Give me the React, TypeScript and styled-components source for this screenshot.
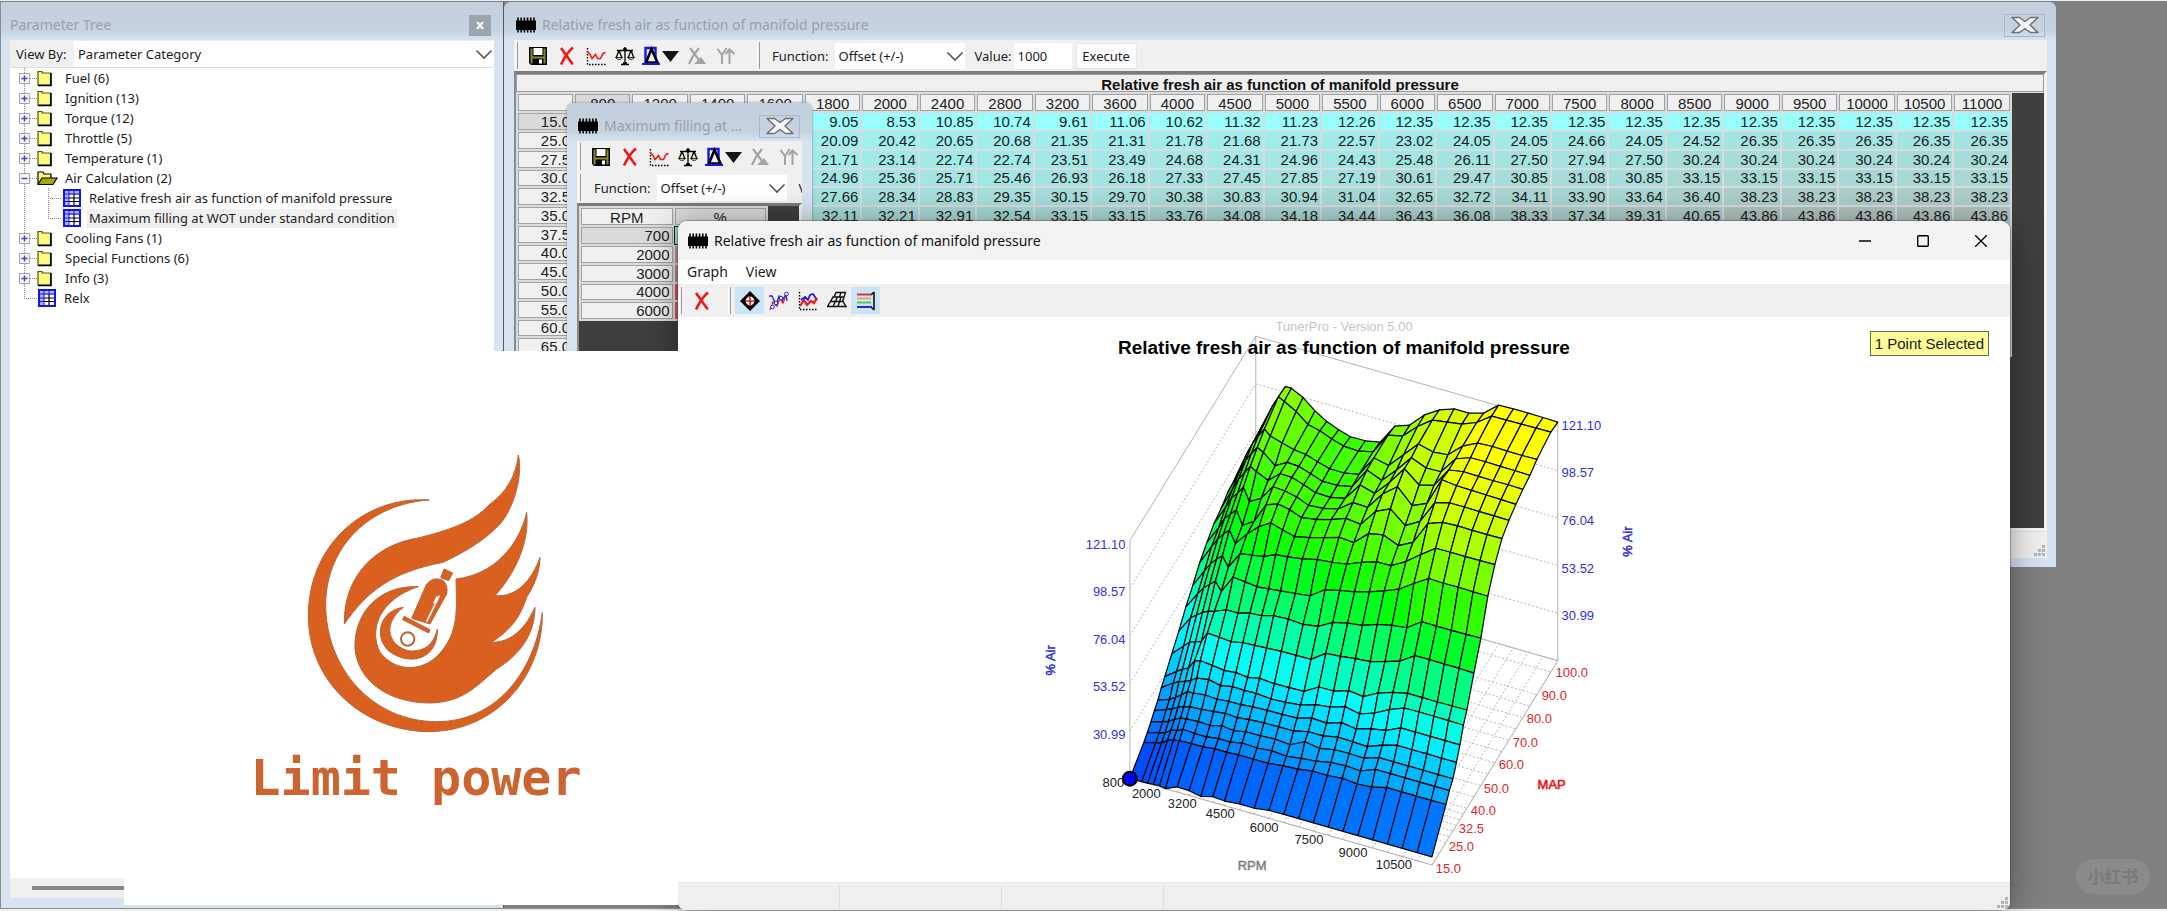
import React from "react";
import styled, { createGlobalStyle, css } from "styled-components";

const UI = `"Noto Sans", "Open Sans", sans-serif`;
const ARIAL = `"Liberation Sans", Arial, sans-serif`;

const GlobalStyle = createGlobalStyle`
  *, *::before, *::after { box-sizing: border-box; }
  body { margin: 0; background: #808080; font: 13px ${UI}; color: #1c1c1c; }
  button, select, input { font: inherit; color: inherit; border: 0; padding: 0; margin: 0; border-radius: 0; }
  button { background: none; }
`;

/* ---------- data ---------- */

const RPM = [
  800, 1200, 1400, 1600, 1800, 2000, 2400, 2800, 3200, 3600, 4000, 4500, 5000, 5500, 6000, 6500, 7000, 7500,
  8000, 8500, 9000, 9500, 10000, 10500, 11000,
];

type AirRow = { map: number; low: number[]; air: number[] };

/* Cells of the table from 1800 RPM upwards; `low` holds the four slower columns. */
const AIR: AirRow[] = [
  { map: 15, low: [8.46, 8.5, 8.7, 8.9], air: [9.05, 8.53, 10.85, 10.74, 9.61, 11.06, 10.62, 11.32, 11.23, 12.26, 12.35, 12.35, 12.35, 12.35, 12.35, 12.35, 12.35, 12.35, 12.35, 12.35, 12.35] },
  { map: 25, low: [14.8, 16.3, 17, 19], air: [20.09, 20.42, 20.65, 20.68, 21.35, 21.31, 21.78, 21.68, 21.73, 22.57, 23.02, 24.05, 24.05, 24.66, 24.05, 24.52, 26.35, 26.35, 26.35, 26.35, 26.35] },
  { map: 27.5, low: [16.8, 18.3, 19, 21.1], air: [21.71, 23.14, 22.74, 22.74, 23.51, 23.49, 24.68, 24.31, 24.96, 24.43, 25.48, 26.11, 27.5, 27.94, 27.5, 30.24, 30.24, 30.24, 30.24, 30.24, 30.24] },
  { map: 30, low: [19.1, 20.9, 21.8, 23.6], air: [24.96, 25.36, 25.71, 25.46, 26.93, 26.18, 27.33, 27.45, 27.85, 27.19, 30.61, 29.47, 30.85, 31.08, 30.85, 33.15, 33.15, 33.15, 33.15, 33.15, 33.15] },
  { map: 32.5, low: [21.8, 23.8, 25, 26.6], air: [27.66, 28.34, 28.83, 29.35, 30.15, 29.7, 30.38, 30.83, 30.94, 31.04, 32.65, 32.72, 34.11, 33.9, 33.64, 36.4, 38.23, 38.23, 38.23, 38.23, 38.23] },
  { map: 35, low: [24, 26, 27.8, 29.8], air: [32.11, 32.21, 32.91, 32.54, 33.15, 33.15, 33.76, 34.08, 34.18, 34.44, 36.43, 36.08, 38.33, 37.34, 39.31, 40.65, 43.86, 43.86, 43.86, 43.86, 43.86] },
];
const MORE_MAP = [37.5, 40, 45, 50, 55, 60, 65];

/* Upper part of the surface as plotted heights, in thirds of a chart unit below `top`. */
const RIDGES: { map: number; top: number; y: number[] }[] = [
  { map: 37.5, top: 600, y: [262, 248, 244, 243, 240, 233, 238, 256, 259, 270, 279, 296, 306, 314, 313, 320, 319, 341, 338, 328, 323, 335, 348, 361, 375] },
  { map: 40, top: 600, y: [229, 213, 206, 203, 182, 181, 195, 210, 217, 231, 234, 250, 262, 273, 260, 272, 271, 289, 278, 276, 279, 292, 305, 317, 329] },
  { map: 45, top: 600, y: [160, 137, 125, 124, 123, 98, 110, 124, 127, 135, 143, 153, 165, 177, 159, 168, 175, 184, 184, 182, 166, 178, 191, 204, 218] },
  { map: 50, top: 600, y: [92, 52, 44, 36, 32, 33, 28, 38, 38, 46, 46, 56, 72, 78, 66, 68, 75, 72, 75, 82, 64, 77, 90, 102, 113] },
  { map: 55, top: 380, y: [680, 640, 622, 612, 602, 633, 590, 604, 619, 625, 631, 639, 646, 628, 630, 634, 634, 631, 626, 609, 594, 608, 620, 634, 647] },
  { map: 60, top: 380, y: [615, 570, 550, 536, 526, 560, 519, 524, 528, 522, 529, 535, 537, 545, 551, 545, 544, 555, 543, 522, 503, 515, 528, 540, 552] },
  { map: 65, top: 380, y: [545, 498, 476, 460, 449, 489, 460, 438, 427, 448, 468, 471, 471, 470, 486, 459, 463, 495, 485, 429, 425, 436, 449, 462, 474] },
  { map: 70, top: 380, y: [486, 442, 414, 400, 388, 434, 422, 373, 370, 387, 411, 416, 417, 413, 431, 392, 385, 435, 422, 366, 367, 379, 393, 406, 419] },
  { map: 75, top: 380, y: [430, 380, 352, 338, 320, 363, 353, 318, 331, 349, 374, 383, 385, 366, 380, 340, 318, 375, 368, 297, 315, 329, 343, 357, 371] },
  { map: 80, top: 380, y: [385, 325, 296, 276, 257, 272, 299, 279, 290, 312, 336, 350, 353, 313, 338, 305, 264, 313, 314, 268, 273, 287, 300, 312, 326] },
  { map: 85, top: 380, y: [335, 272, 240, 218, 200, 215, 255, 245, 257, 279, 302, 314, 318, 268, 299, 268, 231, 262, 273, 234, 231, 243, 257, 270, 284] },
  { map: 90, top: 380, y: [295, 220, 188, 165, 145, 166, 187, 207, 221, 243, 264, 277, 281, 232, 254, 222, 190, 214, 222, 196, 187, 197, 211, 224, 236] },
  { map: 100, top: 380, y: [215, 145, 110, 76, 48, 62, 92, 131, 150, 175, 196, 211, 213, 163, 166, 137, 118, 124, 130, 125, 106, 118, 130, 142, 154] },
  { map: 105, top: 380, y: [180, 107, 78, 48, 17, 22, 50, 90, 122, 147, 168, 180, 184, 136, 133, 102, 87, 84, 97, 97, 73, 84, 97, 110, 124] },
];

/* ---------- projection of the 3-D plot ---------- */

const uOf = (rpm: number) => (rpm - 800) / 10200;
const vOf = (map: number) => (map - 15) / 90;
const X = (u: number, v: number) => 1129.5 + 302.6 * u + 126.1 * v;
const floorY = (u: number, v: number) => 778.3 + 86.7 * u - 204.7 * v;
const RISE = 238.3;

type Vertex = { x: number; y: number; value: number };

const MESH: Vertex[][] = [
  ...AIR.map((r) =>
    [...r.low, ...r.air].map((value, i) => {
      const u = uOf(RPM[i]);
      const v = vOf(r.map);
      return { x: X(u, v), y: floorY(u, v) - (RISE * (value - 8.46)) / 112.64, value };
    })
  ),
  ...RIDGES.map((r) =>
    r.y.map((t, i) => {
      const u = uOf(RPM[i]);
      const v = vOf(r.map);
      const y = r.top + t / 3;
      return { x: X(u, v), y, value: 8.46 + ((floorY(u, v) - y) * 112.64) / RISE };
    })
  ),
];
const MAPS = [...AIR.map((r) => r.map), ...RIDGES.map((r) => r.map)];

const heat = (v: number) => {
  let hue = 60;
  if (v < 44) hue = 180 + (44 - v) * 1.3;
  else if (v < 78) hue = 180 - ((v - 44) * 60) / 34;
  else if (v < 119) hue = 120 - ((v - 78) * 60) / 41;
  return `hsl(${hue.toFixed(0)} 100% 50%)`;
};

const cellTint = (v: number) => {
  const t = Math.min(1, Math.max(0, (v - 12) / 32));
  const mix = (a: number, b: number) => Math.round(a + (b - a) * t);
  return `rgb(${mix(152, 176)}, ${mix(254, 196)}, ${mix(254, 192)})`;
};

/* ---------- shared parts ---------- */

const Desktop = styled.div`
  position: relative;
  min-height: 100vh;
  overflow: hidden;
  display: flex;
  flex-direction: column;
  background: #808080;
  border-top: 1px solid #eef0f0;
`;
const Workspace = styled.div`
  flex: 1;
  display: flex;
  border-top: 1px solid #7b8286;
`;
const BottomStrip = styled.div`
  height: 3px;
  background: #efefef;
  border-top: 1px solid #8c8c8c;
`;

const frame = css`
  display: flex;
  flex-direction: column;
  background: #d7e3f1;
`;
const TitleBar = styled.header`
  height: 38px;
  flex: none;
  display: flex;
  align-items: center;
  background: linear-gradient(#c2d0dd, #c5d3e1 75%, #d7e3f1);
`;
const Caption = styled.h2<{ $dark?: boolean }>`
  flex: 1;
  min-width: 0;
  margin: 0;
  font: 400 14px/20px ${UI};
  color: ${(p) => (p.$dark ? "#111" : "#9aa0a6")};
  white-space: nowrap;
  overflow: hidden;
`;
const GlassClose = styled.button`
  width: 41px;
  height: 23px;
  border: 1px solid #a9b9cb;
  display: grid;
  place-items: center;
`;
const Toolbar = styled.div<{ $h?: number }>`
  height: ${(p) => p.$h ?? 31}px;
  flex: none;
  display: flex;
  align-items: center;
  background: #f0f0f0;
  white-space: nowrap;
  overflow: hidden;
`;
const Grip = styled.span<{ $left?: number; $right?: number }>`
  flex: none;
  width: 3px;
  height: 27px;
  margin: 0 ${(p) => p.$right ?? 0}px 0 ${(p) => p.$left ?? 1}px;
  border-left: 1px solid #fff;
  border-right: 1px solid #9a9a9a;
`;
const ToolButton = styled.button<{ $on?: boolean; $w?: number }>`
  flex: none;
  width: ${(p) => p.$w ?? 29}px;
  height: 27px;
  display: grid;
  place-items: center;
  background: ${(p) => (p.$on ? "#cce4f7" : "none")};
`;
const Dropdown = styled.span<{ $w?: number }>`
  position: relative;
  height: 26px;
  ${(p) => (p.$w ? `flex: none; width: ${p.$w}px;` : "flex: 1;")}
  background: #fff;
  select {
    appearance: none;
    width: 100%;
    height: 100%;
    padding: 0 24px 0 4px;
    background: transparent;
    outline: 0;
  }
  svg {
    position: absolute;
    right: 1px;
    top: 8px;
    pointer-events: none;
  }
`;
const Chevron = () => (
  <svg width="18" height="11" viewBox="0 0 18 11">
    <path d="M1.500 1.500 9 9l7.500-7.500" fill="none" stroke="#555" strokeWidth="1.600" />
  </svg>
);

/* ---------- icons ---------- */

const Chip = styled.svg.attrs({ width: 20, height: 16, viewBox: "0 0 20 16" })`
  flex: none;
  margin-right: 6px;
`;
const ChipIcon = () => (
  <Chip>
    <path d="M0 3.500h20v9.500H0z" fill="#000" />
    <path d="M2 .500v15M5.200 .500v15M8.400 .500v15M11.600 .500v15M14.800 .500v15M18 .500v15" stroke="#000" strokeWidth="1.600" />
  </Chip>
);
const BigX = () => (
  <svg width="30" height="18" viewBox="0 0 30 18">
    <path
      d="M2 1.500h7.500L15 5.500l5.500-4H28L20 9l8 7.500h-7.500L15 12.500l-5.500 4H2L10 9z"
      fill="#f6f6f6"
      stroke="#6d7278"
      strokeWidth="1.500"
      strokeLinejoin="round"
    />
  </svg>
);
const Icon = styled.svg.attrs({ width: 20, height: 20, viewBox: "0 0 20 20" })``;

const SaveIcon = () => (
  <Icon>
    <path d="M1 1h18v18H3l-2-2z" fill="#000" />
    <path d="M2.500 2.500h2v8h11v-8h2v15h-2v-5h-11v5h-2z" fill="#8a8a2a" />
    <path d="M5.500 2h9v7h-9z" fill="#fff" />
    <path d="M11 13.500h3v4h-3z" fill="#fff" />
  </Icon>
);
const RedX = () => (
  <Icon>
    <path d="M4 2 14 16q1 1.500 2 2M16 1.500Q10 6 4 18.500" stroke="#f51414" strokeWidth="2.600" fill="none" />
  </Icon>
);
const WaveIcon = () => (
  <Icon>
    <path d="M1.500 2v16.500H20" fill="none" stroke="#000" strokeWidth="1.400" strokeDasharray="1.500 1.500" />
    <path d="m1 5 3 3.500 2 4 3.500-4 2 4h3l2.500-5 2.500-1" fill="none" stroke="#f01818" strokeWidth="1.600" />
  </Icon>
);
const ScaleIcon = () => (
  <Icon>
    <path d="M10 1v16M2 4.500h16M6 18.500h8M8 17h4M4 4.500 1 12m3-7.500L7 12m9-7.500L13 12m3-7.500 3 7.500" stroke="#000" strokeWidth="1.300" fill="none" />
    <path d="M.500 11.500h7q-3.500 4-7 0zM12.500 11.500h7q-3.500 4-7 0z" fill="#f2ea66" stroke="#000" strokeWidth=".8" />
    <circle cx="10" cy="3.500" r="2" />
  </Icon>
);
const DeltaIcon = () => (
  <svg width="38" height="20" viewBox="0 0 38 20">
    <path d="M3.500 2h10v14h-10z" fill="none" stroke="#1414f0" strokeWidth="2.400" />
    <path d="M9.500 3 4 16.500h11.500z" fill="#f0f0f0" stroke="#000" strokeWidth="2.600" />
    <path d="M0 18h18" stroke="#1414f0" strokeWidth="2" />
    <path d="M20 5h17l-8.500 11z" fill="#151515" />
  </svg>
);
const XTri = () => (
  <Icon>
    <path d="M3 2l9 12M12 2 6 10l-4 8" stroke="#a3a3a3" strokeWidth="2.200" fill="none" />
    <path d="M7 18h12l-5-7z" fill="#a3a3a3" />
  </Icon>
);
const YUp = () => (
  <Icon>
    <path d="M1.500 3 6 9v9M10.500 2 6 9M13.500 18V4M9.500 8l4-4.500L18.500 8" stroke="#a3a3a3" strokeWidth="2" fill="none" />
  </Icon>
);
const TargetIcon = () => (
  <Icon>
    <path d="m10 0 5 5H5zM10 20l5-5H5zM0 10l5-5v10zM20 10l-5-5v10z" />
    <circle cx="10" cy="10" r="5.500" fill="#fff" stroke="#000" strokeWidth="2.200" />
    <path d="M10 5v10M5 10h10" stroke="#e01818" strokeWidth="1.600" />
  </Icon>
);
const TwoTraceIcon = () => (
  <Icon>
    <path d="M0 5h3l4 9 3-9 3 5 4-7 1 7" fill="none" stroke="#2424d8" strokeWidth="1.300" />
    <path d="M1 19l3-8 4 4 3-8 3 5 4-10" fill="none" stroke="#d82020" strokeWidth="1.300" />
    <g fill="#fff" stroke="#2424d8">
      <circle cx="3.500" cy="16" r="1.800" />
      <circle cx="7" cy="12" r="1.800" />
      <circle cx="12" cy="7" r="1.800" />
      <circle cx="17.500" cy="3" r="1.800" />
    </g>
  </Icon>
);
const AxesIcon = () => (
  <Icon>
    <path d="M1.500 1v17.500H20" fill="none" stroke="#000" strokeWidth="1.400" strokeDasharray="1.500 1.500" />
    <path d="m3 9 4-3 3 3 2-5 3-1 4 6" fill="none" stroke="#1c1ce0" strokeWidth="1.800" />
    <path d="m2 15 4-6 3 5 4-4 3 2 3-5" fill="none" stroke="#ee1616" strokeWidth="2.200" />
  </Icon>
);
const MeshIcon = () => (
  <Icon>
    <path
      d="M9 1.500h9.500L17 6H7zM6 6h11l-1.500 4.500H3.500zM3.500 10.500H16L19 15.500H.500zM10.500 6 6 15.500M14 6l-3 9.500M14 1.500 12.500 6"
      fill="none"
      stroke="#111"
      strokeWidth="1.400"
    />
  </Icon>
);
const BandsIcon = () => (
  <Icon>
    <path d="M1 3.500h15" stroke="#e03030" strokeWidth="2" />
    <path d="M1 7.500h14" stroke="#e8a060" strokeWidth="1.600" />
    <path d="M1 11.500h14" stroke="#58c858" strokeWidth="2" />
    <path d="M1 16h15" stroke="#2828e0" strokeWidth="2" />
    <path d="M18 1v18M15.500 3.500 18 1M15.500 16.500 18 19" stroke="#111" strokeWidth="1.600" />
  </Icon>
);

/* ---------- parameter tree ---------- */

const TreePanel = styled.aside`
  ${frame}
  flex: none;
  width: 504px;
  padding: 0 9px 10px;
  border-left: 1px solid #858c92;
  border-right: 1px solid #4f5a62;
`;
const TreeTitle = styled(TitleBar)`
  margin: 0 -9px;
  padding: 8px 12px 0 9px;
`;
const TreeClose = styled.button`
  width: 22px;
  height: 21px;
  background: #9aa5ae;
  color: #fff;
  font: 700 13px/18px "DejaVu Sans", sans-serif;
`;
const ViewBy = styled.div`
  height: 28px;
  display: flex;
  align-items: center;
  background: #fefefe;
  border-top: 1px solid #eee;
  border-bottom: 1px solid #dcdcdc;
  label {
    width: 64px;
    height: 26px;
    padding-left: 6px;
    line-height: 26px;
    background: #f0f0f0;
  }
`;
const TreeList = styled.ul`
  flex: 1;
  margin: 0;
  padding: 0 0 0 7px;
  list-style: none;
  background: #fff;
  ul {
    margin: 0;
    padding: 0 0 0 18px;
    list-style: none;
  }
`;
const TreeRow = styled.div`
  display: flex;
  align-items: center;
  height: 20px;
`;
const TreeText = styled.span<{ $selected?: boolean }>`
  padding: 0 2px;
  line-height: 19px;
  background: ${(p) => (p.$selected ? "#f0f0f0" : "none")};
`;
const Branch = styled.svg`
  flex: none;
`;

const Lead = ({ kind }: { kind: "plus" | "minus" | "last" | "child" | "childLast" }) => {
  const child = kind === "child" || kind === "childLast";
  const last = kind === "last" || kind === "childLast";
  const x = child ? 13 : 7;
  return (
    <Branch width={child ? 27 : 20} height="20" viewBox={child ? "0 0 27 20" : "0 0 20 20"}>
      <path d={`M${x}.5 0V${last ? 10 : 20}M${x} 10.500H27`} stroke="#8a8a8a" strokeDasharray="1 1" fill="none" />
      {(kind === "plus" || kind === "minus") && (
        <>
          <path d="M2.500 5.500h10v10h-10z" fill="#f4f4f8" stroke="#a2a2a8" />
          <path d={kind === "plus" ? "M4.500 10.500h6M7.500 7.500v6" : "M4.500 10.500h6"} stroke="#3f4fa0" strokeWidth="1.400" />
        </>
      )}
    </Branch>
  );
};
const Folder = () => (
  <Branch width="26" height="18" viewBox="0 0 26 18">
    <path d="M1 4V2.500h4V4h8.500v12H1z" fill="#fbfb7c" stroke="#55551a" strokeWidth="1.200" />
    <path d="M14 4v12.500H1" fill="none" stroke="#000" strokeWidth="1.600" />
  </Branch>
);
const OpenFolder = () => (
  <Branch width="26" height="18" viewBox="0 0 26 18">
    <path d="M1 15V3h5l1 2h7v4" fill="#fbfb7c" stroke="#000" strokeWidth="1.200" />
    <path d="M1 15.500 5 9h15l-4 6.500z" fill="#a8a800" stroke="#000" strokeWidth="1.200" />
  </Branch>
);
const TableIcon = () => (
  <Branch width="25" height="18" viewBox="0 0 25 18">
    <path d="M2 1h16v16H2z" fill="#fff" stroke="#1414e6" strokeWidth="2" />
    <path d="M3 2h14v4H3zM3 6h4v10H3z" fill="#a9b4f6" />
    <path d="M3 5h14M7 2v14" stroke="#1414e6" />
    <path d="M7 9h10M7 12.500h10M12 5v11" stroke="#000" strokeWidth="1.200" />
    <path d="M12 2v3M3 9h4M3 12.500h4" stroke="#1414e6" />
  </Branch>
);

const BEFORE = ["Fuel (6)", "Ignition (13)", "Torque (12)", "Throttle (5)", "Temperature (1)"];
const AFTER = ["Cooling Fans (1)", "Special Functions (6)", "Info (3)"];

const ScrollTrack = styled.div`
  height: 20px;
  background: #f0f0f0;
  padding: 8px 20px 0 22px;
  &::after {
    content: "";
    display: block;
    height: 4px;
    background: #868686;
  }
`;

const Closed = ({ name }: { name: string }) => (
  <li>
    <TreeRow>
      <Lead kind="plus" />
      <Folder />
      <TreeText>{name}</TreeText>
    </TreeRow>
  </li>
);

const LongGuide = styled.li`
  background: repeating-linear-gradient(#8a8a8a 0 1px, transparent 1px 2px) 7px 0 / 1px 100% no-repeat;
`;

const ParameterTree = () => (
  <TreePanel>
    <TreeTitle>
      <Caption>Parameter Tree</Caption>
      <TreeClose aria-label="Close">x</TreeClose>
    </TreeTitle>
    <ViewBy>
      <label htmlFor="viewby">View By:</label>
      <Dropdown>
        <select id="viewby">
          <option>Parameter Category</option>
        </select>
        <Chevron />
      </Dropdown>
    </ViewBy>
    <TreeList>
      {BEFORE.map((n) => (
        <Closed key={n} name={n} />
      ))}
      <LongGuide>
        <TreeRow>
          <Lead kind="minus" />
          <OpenFolder />
          <TreeText>Air Calculation (2)</TreeText>
        </TreeRow>
        <ul>
          <li>
            <TreeRow>
              <Lead kind="child" />
              <TableIcon />
              <TreeText>Relative fresh air as function of manifold pressure</TreeText>
            </TreeRow>
          </li>
          <li>
            <TreeRow>
              <Lead kind="childLast" />
              <TableIcon />
              <TreeText $selected>Maximum filling at WOT under standard condition</TreeText>
            </TreeRow>
          </li>
        </ul>
      </LongGuide>
      {AFTER.map((n) => (
        <Closed key={n} name={n} />
      ))}
      <li>
        <TreeRow>
          <Lead kind="last" />
          <TableIcon />
          <TreeText>Relx</TreeText>
        </TreeRow>
      </li>
    </TreeList>
    <ScrollTrack />
  </TreePanel>
);

/* ---------- table windows ---------- */

const EditTools = () => (
  <>
    <Grip $right={5} />
    <ToolButton aria-label="Save"><SaveIcon /></ToolButton>
    <ToolButton aria-label="Discard"><RedX /></ToolButton>
    <ToolButton aria-label="Graph"><WaveIcon /></ToolButton>
    <ToolButton aria-label="Compare"><ScaleIcon /></ToolButton>
    <ToolButton $w={43} aria-label="Difference"><DeltaIcon /></ToolButton>
    <ToolButton aria-label="X axis" disabled><XTri /></ToolButton>
    <ToolButton aria-label="Y axis" disabled><YUp /></ToolButton>
  </>
);
const FieldLabel = styled.label<{ $left?: number; $right?: number }>`
  flex: none;
  margin: 0 ${(p) => p.$right ?? 6}px 0 ${(p) => p.$left ?? 10}px;
`;
const ValueInput = styled.input`
  width: 58px;
  height: 26px;
  padding: 0 4px;
  background: #fff;
`;
const Execute = styled.button`
  width: 61px;
  height: 26px;
  margin-left: 4px;
  background: #fdfdfd;
  border: 1px solid #e6e6e6;
`;
const FunctionField = ({ id, left }: { id: string; left: number }) => (
  <>
    <FieldLabel htmlFor={id} $left={left}>Function:</FieldLabel>
    <Dropdown $w={130}>
      <select id={id}>
        <option>Offset (+/-)</option>
      </select>
      <Chevron />
    </Dropdown>
  </>
);

const MainWindow = styled.section`
  ${frame}
  position: absolute;
  z-index: 1;
  top: 1px;
  left: 504px;
  right: 111px;
  height: 565px;
  padding: 0 9px 9px 10px;
  border-radius: 7px 7px 0 0;
  overflow: hidden;
`;
const MainTitle = styled(TitleBar)`
  margin: 0 -9px 0 -10px;
  padding: 8px 11px 0 12px;
`;
const Sheet = styled.div`
  flex: 1;
  min-height: 0;
  overflow: hidden;
  background: #3f3f3f;
  border-top: 3px solid #7b7b7b;
  border-left: 2px solid #8b8b8b;
  border-right: 3px solid #f4f4f4;
  border-bottom: 3px solid #f4f4f4;
`;
const SheetTitle = styled.div`
  height: 18px;
  background: #efefef;
  border: 1px solid #9b9b9b;
  outline: 1px solid #dedede;
  text-align: center;
  font: 700 15px/19px ${ARIAL};
  color: #111;
`;
const Grid = styled.table`
  width: calc(100% - 32px);
  table-layout: fixed;
  border-collapse: separate;
  border-spacing: 2px;
  background: #d9dcdc;
  font: 15px/15px ${ARIAL};
  th, td { padding: 0; }
  th {
    font-weight: 400;
    background: #f0f0f0;
    border: 1px solid #a2a2a2;
  }
  thead th {
    height: 17px;
    padding-top: 2px;
    line-height: 13px;
  }
  tbody tr { height: 17px; }
  tbody tr:nth-child(4n) { height: 16px; }
  tbody th, td {
    text-align: right;
    padding-right: 2px;
    line-height: 14px;
  }
  th[data-active="true"] { background: #dadada; }
`;
const Heat = styled.td<{ $bg: string; $mark?: boolean }>`
  background: ${(p) => p.$bg};
  ${(p) => p.$mark && "outline: 1px solid #222;"}
`;
const MapCol = styled.col`
  width: 55px;
`;
const StatusBar = styled.footer<{ $h: number }>`
  height: ${(p) => p.$h}px;
  flex: none;
  display: flex;
  justify-content: flex-end;
  align-items: flex-end;
  background: #f0f0f0;
  border-top: 1px solid #e2e2e2;
  padding: 0 2px 2px 0;
`;
const ResizeGrip = () => (
  <svg width="11" height="11" viewBox="0 0 11 11">
    <path d="M8 0h3v3H8zM8 4h3v3H8zM4 4h3v3H4zM8 8h3v3H8zM4 8h3v3H4zM0 8h3v3H0z" fill="#b4b4b4" />
  </svg>
);

const AirTableWindow = () => (
  <MainWindow>
    <MainTitle>
      <ChipIcon />
      <Caption>Relative fresh air as function of manifold pressure</Caption>
      <GlassClose aria-label="Close"><BigX /></GlassClose>
    </MainTitle>
    <Toolbar>
      <EditTools />
      <Grip $left={17} />
      <FunctionField id="fn-air" left={12} />
      <FieldLabel htmlFor="val" $right={2}>Value:</FieldLabel>
      <ValueInput id="val" defaultValue="1000" />
      <Execute>Execute</Execute>
    </Toolbar>
    <Sheet>
      <SheetTitle>Relative fresh air as function of manifold pressure</SheetTitle>
      <Grid>
        <colgroup>
          <MapCol />
        </colgroup>
        <thead>
          <tr>
            <th scope="col" aria-label="MAP" />
            {RPM.map((r) => (
              <th key={r} scope="col" data-active={r === 800}>{r}</th>
            ))}
          </tr>
        </thead>
        <tbody>
          {AIR.map((row) => (
            <tr key={row.map}>
              <th scope="row" data-active={row.map === 15}>{row.map.toFixed(1)}</th>
              {row.low.map((v, i) => (
                <Heat key={i} $bg={cellTint(v)} />
              ))}
              {row.air.map((v, i) => (
                <Heat key={i} $bg={cellTint(v)}>{v.toFixed(2)}</Heat>
              ))}
            </tr>
          ))}
          {MORE_MAP.map((m) => (
            <tr key={m}>
              <th scope="row">{m.toFixed(1)}</th>
            </tr>
          ))}
        </tbody>
      </Grid>
    </Sheet>
    <StatusBar $h={27}><ResizeGrip /></StatusBar>
  </MainWindow>
);

const SmallWindow = styled.section`
  ${frame}
  position: absolute;
  z-index: 2;
  top: 102px;
  left: 567px;
  width: 245px;
  height: 260px;
  padding: 0 10px 8px;
  border-radius: 7px 7px 0 0;
  overflow: hidden;
  box-shadow: 0 0 3px rgba(60, 80, 100, 0.6);
`;
const SmallTitle = styled(TitleBar)`
  margin: 0 -10px;
  padding: 8px 12px 0 11px;
`;
const Fill = styled(Grid)`
  width: 189px;
`;
const FILLING: [number, string][] = [
  [700, "#a0dbd9"],
  [2000, "#c49494"],
  [3000, "#bd8686"],
  [4000, "#dc4a4e"],
  [6000, "#de5558"],
];

const FillingWindow = () => (
  <SmallWindow>
    <SmallTitle>
      <ChipIcon />
      <Caption>Maximum filling at ...</Caption>
      <GlassClose aria-label="Close"><BigX /></GlassClose>
    </SmallTitle>
    <Toolbar>
      <EditTools />
    </Toolbar>
    <Toolbar>
      <Grip />
      <FunctionField id="fn-fill" left={13} />
      <FieldLabel as="span" $left={12}>V</FieldLabel>
    </Toolbar>
    <Sheet>
      <Fill>
        <thead>
          <tr>
            <th scope="col">RPM</th>
            <th scope="col" data-active="true">%</th>
          </tr>
        </thead>
        <tbody>
          {FILLING.map(([r, bg]) => (
            <tr key={r}>
              <th scope="row" data-active={r === 700}>{r}</th>
              <Heat $bg={bg} $mark={r === 700} />
            </tr>
          ))}
        </tbody>
      </Fill>
    </Sheet>
  </SmallWindow>
);

/* ---------- graph window ---------- */

const GraphShell = styled.section`
  position: absolute;
  z-index: 4;
  top: 220px;
  left: 678px;
  right: 157px;
  bottom: 1px;
  display: flex;
  flex-direction: column;
  background: #fff;
  border-radius: 9px 9px 8px 8px;
  overflow: hidden;
`;
const GraphShadow = styled.div`
  position: absolute;
  z-index: 2;
  top: 220px;
  left: 678px;
  right: 157px;
  bottom: 1px;
  border-radius: 9px;
  box-shadow: 0 0 1px 1px rgba(60, 60, 60, 0.4), 0 4px 36px rgba(0, 0, 0, 0.38);
`;
const GraphTitle = styled.header`
  height: 39px;
  flex: none;
  display: flex;
  align-items: center;
  padding-left: 10px;
  background: #f3f3f3;
`;
const CaptionButton = styled.button`
  width: 58px;
  height: 39px;
  display: grid;
  place-items: center;
`;
const MenuBar = styled.nav`
  height: 24px;
  flex: none;
  display: flex;
  gap: 18px;
  padding-left: 9px;
  font: 14px/20px ${UI};
`;
const Plot = styled.div`
  position: relative;
  flex: 1;
  min-height: 0;
  svg {
    display: block;
    width: 100%;
    height: 100%;
  }
`;
const Selected = styled.output`
  position: absolute;
  top: 14px;
  right: 21px;
  height: 25px;
  padding: 0 4px;
  font: 15px/23px ${ARIAL};
  background: #fdfa9a;
  border: 1px solid #6b6b4a;
`;
const GraphStatus = styled.footer`
  height: 28px;
  flex: none;
  display: grid;
  grid-template-columns: 162px 162px 162px 1fr;
  background: #efefef;
  border-top: 1px solid #e6e6e6;
  span {
    margin: 3px 0 1px;
    border-right: 1px solid #dedede;
  }
  div {
    display: flex;
    justify-content: flex-end;
    align-items: flex-end;
    padding: 0 2px 2px;
  }
`;
const AxisText = styled.text`
  font: 13px ${ARIAL};
`;

const Z_LABELS = ["121.10", "98.57", "76.04", "53.52", "30.99"];
const RPM_LABELS: [string, number, number][] = [
  ["800", 1113, 787], ["2000", 1146, 798], ["3200", 1182, 808], ["4500", 1220, 818], ["6000", 1264, 832],
  ["7500", 1309, 844], ["9000", 1353, 857], ["10500", 1394, 869],
];
const MAP_LABELS: [string, number, number][] = [
  ["15.0", 1436, 873], ["25.0", 1449, 851], ["32.5", 1459, 833], ["40.0", 1471, 815], ["50.0", 1484, 793],
  ["60.0", 1499, 769], ["70.0", 1513, 747], ["80.0", 1527, 723], ["90.0", 1542, 700], ["100.0", 1556, 677],
];

const seg = (u1: number, v1: number, w1: number, u2: number, v2: number, w2: number) =>
  `M${X(u1, v1).toFixed(1)} ${(floorY(u1, v1) - RISE * w1).toFixed(1)}L${X(u2, v2).toFixed(1)} ${(
    floorY(u2, v2) - RISE * w2
  ).toFixed(1)}`;

const faces: { key: string; points: string; fill: string }[] = [];
for (let r = MESH.length - 2; r >= 0; r--) {
  for (let c = 0; c < RPM.length - 1; c++) {
    const q = [MESH[r][c], MESH[r][c + 1], MESH[r + 1][c + 1], MESH[r + 1][c]];
    faces.push({
      key: `${r}-${c}`,
      points: q.map((p) => `${p.x.toFixed(1)},${p.y.toFixed(1)}`).join(" "),
      fill: heat(q.reduce((s, p) => s + p.value, 0) / 4),
    });
  }
}

const SurfacePlot = () => (
  <svg viewBox="678 316 1332 566" role="img" aria-label="Surface plot">
    <path
      d={[
        seg(0, 0, 0, 0, 0, 1), seg(0, 0, 1, 0, 1, 1), seg(0, 1, 0, 0, 1, 1), seg(0, 1, 1, 1, 1, 1),
        seg(1, 1, 0, 1, 1, 1), seg(0, 0, 0, 1, 0, 0), seg(1, 0, 0, 1, 1, 0), seg(0, 1, 0, 1, 1, 0), seg(0, 0, 0, 0, 1, 0),
      ].join("")}
      fill="none"
      stroke="#b2b2b2"
    />
    <path
      d={[
        ...[0.2, 0.4, 0.6, 0.8].map((w) => seg(0, 0, w, 0, 1, w) + seg(0, 1, w, 1, 1, w)),
        ...RPM.map((r) => seg(uOf(r), 0, 0, uOf(r), 1, 0)),
        ...MAPS.map((m) => seg(0, vOf(m), 0, 1, vOf(m), 0)),
      ].join("")}
      fill="none"
      stroke="#b4b4b4"
      strokeDasharray="2 2"
    />
    <AxisText x="1344" y="330" textAnchor="middle" fill="#c4c4c4">TunerPro - Version 5.00</AxisText>
    <text x="1344" y="353" textAnchor="middle" fontFamily="Liberation Sans, Arial, sans-serif" fontSize="19" fontWeight="700">
      Relative fresh air as function of manifold pressure
    </text>
    <g stroke="#000" strokeWidth="1.200" strokeLinejoin="round">
      {faces.map((f) => (
        <polygon key={f.key} points={f.points} fill={f.fill} />
      ))}
    </g>
    <g fill="#3030d8">
      {Z_LABELS.map((t, i) => (
        <React.Fragment key={t}>
          <AxisText x="1125" y={548 + i * 47.7} textAnchor="end">{t}</AxisText>
          <AxisText x="1562" y={429 + i * 47.7}>{t}</AxisText>
        </React.Fragment>
      ))}
      <g stroke="#3030d8" strokeWidth="0.500">
        <AxisText textAnchor="middle" transform="translate(1054 660) rotate(-90)">% Air</AxisText>
        <AxisText textAnchor="middle" transform="translate(1633 541) rotate(-90)">% Air</AxisText>
      </g>
    </g>
    <g fill="#222" textAnchor="middle">
      {RPM_LABELS.map(([t, x, y]) => (
        <AxisText key={t} x={x} y={y}>{t}</AxisText>
      ))}
    </g>
    <g fill="#e02626">
      {MAP_LABELS.map(([t, x, y]) => (
        <AxisText key={t} x={x} y={y}>{t}</AxisText>
      ))}
    </g>
    <AxisText x="1252" y="870" textAnchor="middle" fill="#7a7a7a" stroke="#7a7a7a" strokeWidth="0.400">RPM</AxisText>
    <AxisText x="1552" y="789" textAnchor="middle" fill="#e81414" stroke="#e81414" strokeWidth="0.600">MAP</AxisText>
    <circle cx="1129.500" cy="778.500" r="7" fill="#0505f5" stroke="#000" strokeWidth="2" />
  </svg>
);

const GraphWindow = () => (
  <GraphShell>
    <GraphTitle>
      <ChipIcon />
      <Caption $dark>Relative fresh air as function of manifold pressure</Caption>
      <CaptionButton aria-label="Minimize">
        <svg width="12" height="12"><path d="M0 6h12" stroke="#000" strokeWidth="1.300" /></svg>
      </CaptionButton>
      <CaptionButton aria-label="Maximize">
        <svg width="12" height="12"><rect x="0.700" y="0.700" width="10.600" height="10.600" rx="1" fill="none" stroke="#000" strokeWidth="1.400" /></svg>
      </CaptionButton>
      <CaptionButton aria-label="Close">
        <svg width="12" height="12"><path d="M0 0l12 12M12 0 0 12" stroke="#000" strokeWidth="1.300" /></svg>
      </CaptionButton>
    </GraphTitle>
    <MenuBar>
      <button>Graph</button>
      <button>View</button>
    </MenuBar>
    <Toolbar $h={33}>
      <Grip $right={5} />
      <ToolButton aria-label="Discard"><RedX /></ToolButton>
      <Grip $left={12} $right={4} />
      <ToolButton $on aria-label="Track"><TargetIcon /></ToolButton>
      <ToolButton aria-label="Traces"><TwoTraceIcon /></ToolButton>
      <ToolButton aria-label="Axes"><AxesIcon /></ToolButton>
      <ToolButton aria-label="Mesh"><MeshIcon /></ToolButton>
      <ToolButton $on aria-label="Bands"><BandsIcon /></ToolButton>
    </Toolbar>
    <Plot>
      <SurfacePlot />
      <Selected>1 Point Selected</Selected>
    </Plot>
    <GraphStatus>
      <span />
      <span />
      <span />
      <div><ResizeGrip /></div>
    </GraphStatus>
  </GraphShell>
);

/* ---------- logo card and watermark ---------- */

const LogoCard = styled.figure`
  position: absolute;
  z-index: 3;
  top: 350px;
  left: 124px;
  width: 554px;
  bottom: 6px;
  margin: 0;
  padding-top: 78px;
  background: #fff;
  display: flex;
  flex-direction: column;
  align-items: center;
  svg {
    flex: none;
    margin-left: 38px;
  }
  figcaption {
    margin-top: 7px;
    padding-left: 30px;
    align-self: stretch;
    text-align: center;
    font: 700 50px/60px "DejaVu Sans Mono", monospace;
    color: #cc6430;
  }
`;
const Watermark = styled.div`
  position: absolute;
  right: 17px;
  bottom: 17px;
  width: 74px;
  height: 35px;
  border-radius: 18px;
  background: #8b8b8b;
  color: #797979;
  text-align: center;
  font: 700 17px/34px "Noto Sans CJK SC", sans-serif;
`;

const Logo = () => (
  <LogoCard>
    <svg width="380" height="312" viewBox="0 0 1140 936">
      <g fill="#d9601f" stroke="#b5673e" strokeWidth="3">
        <path d="M598 213C400 200 235 350 235 560 235 760 400 908 600 908 800 905 940 740 937 550 912 740 790 878 620 878 430 878 285 720 287 520 292 350 420 225 598 213Z" />
        <path d="M343 585C340 430 450 345 560 328 660 303 730 280 780 225 830 190 858 140 865 78 880 140 850 240 810 285 760 340 690 375 640 400 480 430 410 490 343 585Z" />
        <path d="M565 473C440 468 370 560 375 660 385 760 480 822 600 822 700 820 740 770 800 720 865 680 915 620 915 535 890 590 850 640 785 640 845 600 870 565 890 505 910 475 930 430 930 385 905 455 860 505 795 500 850 440 900 345 890 250 870 340 800 435 678 450 680 540 685 600 640 660 590 730 500 735 450 670 415 600 450 510 565 473Z" />
        <path d="M520 535C450 545 430 620 475 665 540 715 625 690 622 600 612 640 590 668 540 666 480 655 450 590 520 535Z" />
        <path d="M545 568 590 465Q612 440 640 455 655 470 650 495L600 585Z" />
        <path d="M642 420 668 432 656 455 632 446Z" />
        <path d="M522 562 600 602 596 612 518 572Z" />
      </g>
      <path d="M628 500 590 578" stroke="#fff" strokeWidth="5" />
      <path d="M622 502 612 524" stroke="#fff" strokeWidth="6" />
      <circle cx="533" cy="630" r="20" fill="none" stroke="#b5673e" strokeWidth="6" />
    </svg>
    <figcaption>Limit power</figcaption>
  </LogoCard>
);

export default function App() {
  return (
    <>
      <GlobalStyle />
      <Desktop>
        <Workspace>
          <ParameterTree />
        </Workspace>
        <BottomStrip />
        <AirTableWindow />
        <FillingWindow />
        <GraphShadow />
        <Logo />
        <GraphWindow />
        <Watermark>小红书</Watermark>
      </Desktop>
    </>
  );
}
